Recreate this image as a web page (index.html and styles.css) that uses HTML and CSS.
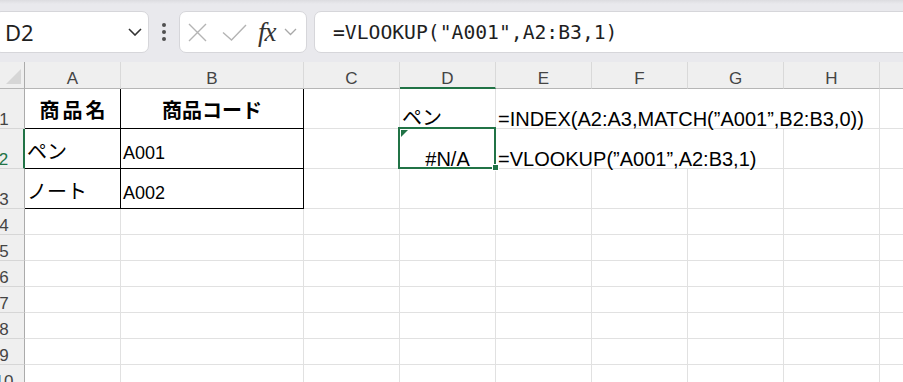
FILE: index.html
```html
<!DOCTYPE html>
<html lang="ja">
<head>
<meta charset="utf-8">
<title>Excel VLOOKUP</title>
<link rel="stylesheet" href="styles.css">
</head>
<body>
<div class="toolbar">
  <div class="namebox">
    <span class="name">D2</span>
    <svg class="chev" width="14" height="8" viewBox="0 0 14 8"><path d="M1 1L7 7L13 1" fill="none" stroke="#333" stroke-width="1.6"/></svg>
  </div>
  <div class="dots"><i></i><i></i><i></i></div>
  <div class="fxbox">
    <svg class="ico-x" width="19" height="19" viewBox="0 0 19 19"><path d="M1 1L18 18M18 1L1 18" fill="none" stroke="#b4b4b4" stroke-width="1.4"/></svg>
    <svg class="ico-check" width="25" height="17" viewBox="0 0 25 17"><path d="M1 8.5L9.5 16L24 1" fill="none" stroke="#b4b4b4" stroke-width="1.4"/></svg>
    <span class="fx">fx</span>
    <svg class="chev-sm" width="13" height="8" viewBox="0 0 13 8"><path d="M1 1L6.5 6.5L12 1" fill="none" stroke="#a8a8a8" stroke-width="1.3"/></svg>
  </div>
  <div class="formula">=VLOOKUP("A001",A2:B3,1)</div>
</div>

<div class="sheet">
  <div class="c corner"><svg width="40" height="26" viewBox="0 0 40 26"><path d="M37 7L37 22L22 22Z" fill="#d6d6d6"/></svg></div>
  <div class="c ch">A</div>
  <div class="c ch">B</div>
  <div class="c ch">C</div>
  <div class="c ch sel">D</div>
  <div class="c ch">E</div>
  <div class="c ch">F</div>
  <div class="c ch">G</div>
  <div class="c ch">H</div>
  <div class="c ch"></div>

  <div class="c rh">1</div>
  <div class="c tb th th1">商品名</div>
  <div class="c tb th th2">商品コード</div>
  <div class="c"></div>
  <div class="c de pen"><span class="jp">ペン</span></div>
  <div class="c de span4">=INDEX(A2:A3,MATCH(”A001”,B2:B3,0))</div>
  <div class="c"></div>

  <div class="c rh sel">2</div>
  <div class="c tb cj"><span class="jp">ペン</span></div>
  <div class="c tb">A001</div>
  <div class="c"></div>
  <div class="c de err">#N/A<span class="tri"></span><span class="selbox"></span><span class="handle"></span></div>
  <div class="c de span3">=VLOOKUP(”A001”,A2:B3,1)</div>
  <div class="c"></div>
  <div class="c"></div>

  <div class="c rh">3</div>
  <div class="c tb cj"><span class="jp">ノート</span></div>
  <div class="c tb">A002</div>
  <div class="c"></div><div class="c"></div><div class="c"></div><div class="c"></div><div class="c"></div><div class="c"></div><div class="c"></div>

  <div class="c rh">4</div>
  <div class="c"></div><div class="c"></div><div class="c"></div><div class="c"></div><div class="c"></div><div class="c"></div><div class="c"></div><div class="c"></div><div class="c"></div>
  <div class="c rh">5</div>
  <div class="c"></div><div class="c"></div><div class="c"></div><div class="c"></div><div class="c"></div><div class="c"></div><div class="c"></div><div class="c"></div><div class="c"></div>
  <div class="c rh">6</div>
  <div class="c"></div><div class="c"></div><div class="c"></div><div class="c"></div><div class="c"></div><div class="c"></div><div class="c"></div><div class="c"></div><div class="c"></div>
  <div class="c rh">7</div>
  <div class="c"></div><div class="c"></div><div class="c"></div><div class="c"></div><div class="c"></div><div class="c"></div><div class="c"></div><div class="c"></div><div class="c"></div>
  <div class="c rh">8</div>
  <div class="c"></div><div class="c"></div><div class="c"></div><div class="c"></div><div class="c"></div><div class="c"></div><div class="c"></div><div class="c"></div><div class="c"></div>
  <div class="c rh">9</div>
  <div class="c"></div><div class="c"></div><div class="c"></div><div class="c"></div><div class="c"></div><div class="c"></div><div class="c"></div><div class="c"></div><div class="c"></div>
  <div class="c rh">10</div>
  <div class="c"></div><div class="c"></div><div class="c"></div><div class="c"></div><div class="c"></div><div class="c"></div><div class="c"></div><div class="c"></div><div class="c"></div>
</div>
</body>
</html>
```
FILE: styles.css
```css
* { box-sizing: border-box; }
html, body { margin: 0; padding: 0; }
body {
  width: 903px;
  height: 382px;
  overflow: hidden;
  background: #fff;
  font-family: "Liberation Sans", "Noto Sans CJK JP", sans-serif;
  color: #000;
}

/* ---------- toolbar ---------- */
.toolbar {
  height: 62px;
  display: flex;
  align-items: flex-start;
  padding-top: 11px;
  background: linear-gradient(#dcdce0 0, #e9e9ed 4px, #e9e9ed 100%);
}
.namebox {
  margin-left: -6px;
  width: 155px;
  height: 42px;
  flex: none;
  background: #fff;
  border: 1px solid #d6d6da;
  border-radius: 7px;
  display: flex;
  align-items: center;
  justify-content: space-between;
  padding: 0 6px 0 10px;
}
.name {
  font-family: "Noto Sans", sans-serif;
  font-size: 22px;
  color: #1f1f1f;
}
.dots {
  width: 30px;
  height: 42px;
  flex: none;
  display: flex;
  flex-direction: column;
  align-items: center;
  justify-content: center;
  gap: 3px;
}
.dots i {
  display: block;
  width: 4px;
  height: 4px;
  border-radius: 50%;
  background: #505050;
}
.fxbox {
  width: 128px;
  height: 42px;
  flex: none;
  background: #fff;
  border: 1px solid #d6d6da;
  border-radius: 7px;
  display: flex;
  align-items: center;
  padding-left: 8px;
}
.ico-check { margin-left: 15px; }
.fx {
  margin-left: 11px;
  font-family: "Liberation Serif", serif;
  font-style: italic;
  font-size: 27px;
  line-height: 1;
  color: #333;
  letter-spacing: -1px;
}
.chev-sm { margin-left: 8px; }
.formula {
  margin-left: 7px;
  margin-right: -20px;
  flex: 1;
  height: 42px;
  background: #fff;
  border: 1px solid #d6d6da;
  border-radius: 7px;
  display: flex;
  align-items: center;
  padding-left: 18px;
  font-family: "DejaVu Sans Mono", monospace;
  font-size: 19.7px;
  color: #1f1f1f;
  white-space: nowrap;
}

/* ---------- sheet grid ---------- */
.sheet {
  display: grid;
  grid-template-columns: 41px 96px 183px repeat(7, 96px);
  grid-template-rows: 27px 40px 40px 40px repeat(7, 26px);
  margin-left: -16px;
  width: max-content;
}
.c {
  position: relative;
  border-right: 1px solid #e1e1e1;
  border-bottom: 1px solid #e1e1e1;
  display: flex;
  align-items: flex-end;
  white-space: nowrap;
  font-size: 18px;
  line-height: 16px;
  padding: 0 2px 7px;
}
.corner {
  background: #efefef;
  border-right-color: #ababab;
  border-bottom-color: #b6b6b6;
  padding: 0;
}
.ch {
  background: #efefef;
  border-right-color: #d9d9d9;
  border-bottom-color: #b6b6b6;
  justify-content: center;
  font-size: 17px;
  color: #444;
  padding: 0 0 1px;
}
.ch.sel {
  border-bottom: 2px solid #217346;
  padding-bottom: 0;
}
.rh {
  background: #efefef;
  border-right-color: #ababab;
  border-bottom-color: #d6d6d6;
  justify-content: center;
  font-size: 17px;
  color: #444;
  padding: 0;
}
.rh.sel {
  color: #217346;
  border-right: 2px solid #217346;
}

/* table with black borders */
.tb {
  border-right-color: #000;
  border-bottom-color: #000;
}
.th {
  font-family: "Noto Sans CJK JP", sans-serif;
  font-weight: 700;
  font-size: 20px;
  justify-content: center;
  padding-bottom: 10px;
}
.th1 { letter-spacing: 3px; padding-left: 5px; }
.th2 { letter-spacing: 0; }
.jp {
  font-family: "Noto Sans CJK JP", sans-serif;
  font-size: 20px;
}
.cj { padding-bottom: 9px; }

/* D / E cells */
.de {
  font-size: 20px;
  padding-bottom: 1px;
}
.pen { padding-bottom: 3px; }
.span4 { grid-column: span 4; }
.span3 { grid-column: span 3; }
.err { justify-content: center; }
.tri {
  position: absolute;
  left: 1px;
  top: 1px;
  width: 7px;
  height: 7px;
  background: #217346;
  clip-path: polygon(0 0, 100% 0, 0 100%);
}
.selbox {
  position: absolute;
  left: -2px;
  top: -2px;
  right: -1px;
  bottom: -1px;
  border: 2px solid #217346;
  pointer-events: none;
}
.handle {
  position: absolute;
  right: -4px;
  bottom: -3px;
  width: 7px;
  height: 7px;
  background: #217346;
  border: 1px solid #fff;
  z-index: 2;
}
```
